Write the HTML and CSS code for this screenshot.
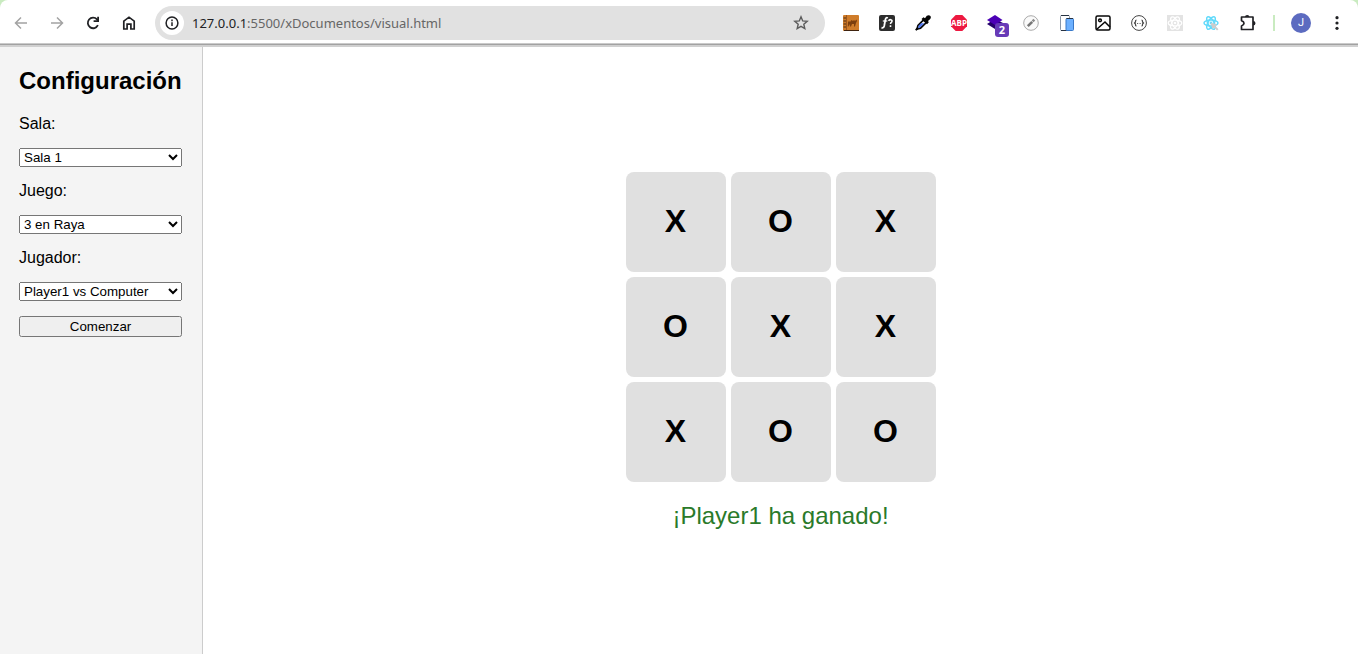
FILE: index.html
```html
<!DOCTYPE html>
<html lang="es">
<head>
<meta charset="utf-8">
<title>3 en Raya</title>
<link rel="stylesheet" href="styles.css">
</head>
<body>
<header class="toolbar">
  <button class="tool muted" aria-label="Atrás"><svg width="16" height="16" viewBox="0 0 16 16" fill="none" stroke="currentColor" stroke-width="1.5"><path d="M14 8H3M8 2.500L2.500 8L8 13.500"/></svg></button>
  <button class="tool muted" aria-label="Adelante"><svg width="16" height="16" viewBox="0 0 16 16" fill="none" stroke="currentColor" stroke-width="1.5"><path d="M2 8H13M8 2.500L13.500 8L8 13.500"/></svg></button>
  <button class="tool" aria-label="Recargar"><svg width="16" height="16" viewBox="0 0 16 16" fill="none" stroke="currentColor" stroke-width="1.8"><path d="M12.900 10.200A5.300 5.300 0 1 1 12 4.300L13 5.500"/><path d="M13.100 1.800V6.200H8.600"/></svg></button>
  <button class="tool" aria-label="Inicio"><svg width="16" height="16" viewBox="0 0 16 16" fill="none" stroke="currentColor" stroke-width="1.7"><path d="M2.800 6.200L8 2.200L13.200 6.200V14H9.900V9.200H6.100V14H2.800Z"/></svg></button>
  <div class="address">
    <button class="site-info" aria-label="Información del sitio"><svg width="16" height="16" viewBox="0 0 16 16" fill="none" stroke="currentColor" stroke-width="1.500"><circle cx="8" cy="8" r="5.900"/><path d="M8 7.200V11M8 4.600V6.200"/></svg></button>
    <div class="url"><span class="host">127.0.0.1</span>:5500/xDocumentos/visual.html</div>
    <button class="bookmark" aria-label="Marcador"><svg width="16" height="16" viewBox="0 0 16 16" fill="none" stroke="currentColor" stroke-width="1.400"><path d="M8 1.800L9.700 5.900L14.200 6.300L10.800 9.200L11.800 13.600L8 11.300L4.200 13.600L5.200 9.200L1.800 6.300L6.300 5.900Z"/></svg></button>
  </div>
  <nav class="extensions" aria-label="Extensiones">
    <button class="tool" aria-label="Perl"><svg width="16" height="16" viewBox="0 0 16 16"><rect width="16" height="16" rx="1" fill="#cf7c2a"/><path d="M1 15.500H16" stroke="#3f230f"/><path d="M3.500 0V15" stroke="#9c571e"/><path d="M.5 3H3M.5 6H3M.5 9H3M.5 12H3" stroke="#4c2c12" stroke-width="1.200"/><path d="M5 7L6 6L7 7L8.500 5L10 6L11 5L12 6L13.500 4.500L14 6L13 8L12 11.500H11V9H9L8 11.500H7L6.500 9L5.500 11.500H4.800Z" fill="#7d400f"/></svg></button>
    <button class="tool" aria-label="Fuentes"><svg width="16" height="16" viewBox="0 0 16 16"><rect width="16" height="16" rx="2" fill="#2d2d2d"/><g fill="none" stroke="#fff"><path d="M8.800 3.100Q6.900 1.700 6.300 5L5.200 11Q4.700 13.400 2.500 12.600" stroke-width="1.800"/><path d="M3.800 6H8.300" stroke-width="1.200"/><path d="M9.600 5.800Q10.200 4.500 11.700 4.700Q13.800 5.300 12.600 7.100Q11.500 7.700 11.500 9M11.500 10.300V12" stroke-width="1.600"/></g></svg></button>
    <button class="tool" aria-label="Cuentagotas"><svg width="16" height="16" viewBox="0 0 16 16"><path d="M2 14L3 10.500L8.500 5L11.300 7.500L5.500 13.200Z" fill="#fff" stroke="#050505" stroke-width="1.700"/><path d="M3 13.200L3.800 10.500L6 8.300H9.300L5 12.500Z" fill="#4a73f0"/><path d="M6.500 4L8.500 2.300L10 3.200L11.800.8Q14 -.5 15.400 1Q16.500 2.500 15 4.300L13 6L13.800 7.300L12 9.300Z" fill="#050505"/><path d="M.8 15.200L2.500 13.300" stroke="#050505" stroke-width="2"/></svg></button>
    <button class="tool" aria-label="Adblock Plus"><svg width="16" height="16" viewBox="0 0 16 16"><path d="M4.700 0H11.300L16 4.700V11.300L11.300 16H4.700L0 11.300V4.700Z" fill="#ed1941"/><text x="8" y="11" class="abp" text-anchor="middle">ABP</text></svg></button>
    <button class="tool" aria-label="Capas, 2"><svg width="28" height="28" viewBox="-2 -2 28 28"><path d="M4 13L12 8L20 12L12 18Z" fill="#24006b"/><path d="M4 9L12 4L19.500 9L12 14Z" fill="#4b00b5"/><rect x="12" y="12" width="14" height="14" rx="3" fill="#673ab7"/><text x="19" y="23" class="count" text-anchor="middle">2</text></svg></button>
    <button class="tool" aria-label="Editar"><svg width="16" height="16" viewBox="0 0 16 16"><circle cx="8" cy="8" r="7.300" fill="#fafafa" stroke="#aaa"/><path d="M4.800 11.200L9.200 6.800" stroke="#777" stroke-width="2.600"/><path d="M9.600 6.400L11.300 4.700" stroke="#8a8a8a" stroke-width="2.600"/></svg></button>
    <button class="tool" aria-label="Dispositivos"><svg width="16" height="16" viewBox="0 0 16 16"><rect x="1.500" y=".5" width="9" height="15" rx="1" fill="#fff" stroke="#8a97a8"/><path d="M2 .5H10M2 15.500H8" stroke="#263242"/><rect x="7" y="3.500" width="7.500" height="12" rx="1" fill="#6cb0ff" stroke="#3978c7"/><path d="M7.500 3.500H14" stroke="#263242"/></svg></button>
    <button class="tool" aria-label="Imágenes"><svg width="16" height="16" viewBox="0 0 16 16" fill="none" stroke="#080808" stroke-width="1.500"><rect x="1" y="1" width="14" height="14" rx="1.500"/><circle cx="5" cy="5.300" r="1.400"/><path d="M1.500 14.500L10 7L15 12"/></svg></button>
    <button class="tool" aria-label="JSON"><svg width="16" height="16" viewBox="0 0 16 16" fill="none" stroke="#444"><circle cx="8" cy="8" r="7.400"/><path d="M5.500 5Q4.500 5 4.500 6V7L3.500 8L4.500 9V10Q4.500 11 5.500 11M10.500 5Q11.500 5 11.500 6V7L12.500 8L11.500 9V10Q11.500 11 10.500 11" stroke-width="1.200"/><path d="M6.200 8.500H7.200M8.600 8.500H9.600"/></svg></button>
    <button class="tool" aria-label="React inactivo"><svg width="16" height="16" viewBox="0 0 16 16"><rect width="16" height="16" fill="#e3e3e3"/><g fill="none" stroke="#fff" stroke-width="1.200"><ellipse cx="8" cy="8" rx="6.800" ry="2.900"/><ellipse cx="8" cy="8" rx="6.800" ry="2.900" transform="rotate(60 8 8)"/><ellipse cx="8" cy="8" rx="6.800" ry="2.900" transform="rotate(120 8 8)"/></g><circle cx="8" cy="8" r="1.300" fill="#fff"/></svg></button>
    <button class="tool" aria-label="React"><svg width="16" height="16" viewBox="0 0 16 16"><g fill="none" stroke="#61dafb" stroke-width="1.500"><ellipse cx="8" cy="8" rx="7" ry="3"/><ellipse cx="8" cy="8" rx="7" ry="3" transform="rotate(60 8 8)"/><ellipse cx="8" cy="8" rx="7" ry="3" transform="rotate(120 8 8)"/></g><circle cx="8" cy="8" r="1.400" fill="#61dafb"/><path d="M7.500 7.500L14 9.500L12.600 11.300L15.500 14.200L14 15.500L11.300 12.600L9.500 14Z" fill="#ccc"/></svg></button>
    <button class="tool" aria-label="Extensiones"><svg width="20" height="20" viewBox="-1 -1 20 20" fill="none" stroke="#202124" stroke-width="1.700"><path d="M3.500 3H15V15.500H3.500V12Q6 11 6 9.300Q6 7.500 3.500 6.600Z" stroke-linejoin="round"/><path d="M7 3Q7 .9 9.200 .9Q11.400 .9 11.400 3ZM15 7Q17.500 7 17.500 9.200Q17.500 11.500 15 11.500Z" fill="#202124" stroke="none"/></svg></button>
  </nav>
  <div class="divider"></div>
  <button class="tool" aria-label="Perfil"><span class="avatar">J</span></button>
  <button class="tool" aria-label="Menú"><svg width="16" height="16" viewBox="0 0 16 16" fill="#202124"><circle cx="8" cy="2.700" r="1.600"/><circle cx="8" cy="8" r="1.600"/><circle cx="8" cy="13.300" r="1.600"/></svg></button>
</header>
<div class="page">
  <aside class="sidebar">
    <h2 class="title">Configuración</h2>
    <label for="sala">Sala:</label>
    <select id="sala" class="control"><option>Sala 1</option></select>
    <label for="juego">Juego:</label>
    <select id="juego" class="control"><option>3 en Raya</option></select>
    <label for="jugador">Jugador:</label>
    <select id="jugador" class="control"><option>Player1 vs Computer</option></select>
    <button class="start">Comenzar</button>
  </aside>
  <main class="game">
    <div class="board">
      <button class="cell">X</button><button class="cell">O</button><button class="cell">X</button>
      <button class="cell">O</button><button class="cell">X</button><button class="cell">X</button>
      <button class="cell">X</button><button class="cell">O</button><button class="cell">O</button>
    </div>
    <p class="message">¡Player1 ha ganado!</p>
  </main>
</div>
</body>
</html>
```
FILE: styles.css
```css
* {
  box-sizing: border-box;
}

body {
  margin: 0;
  min-height: 100vh;
  display: flex;
  flex-direction: column;
  background: #c9ebc0;
  color: #000;
  font-family: Arial, "Liberation Sans", sans-serif;
}

.toolbar {
  display: flex;
  align-items: center;
  height: 47px;
  padding: 0 3px 1px;
  background: #fff;
  border-radius: 8px 8px 0 0;
  box-shadow: inset 0 -2px #d0d0d0, inset 0 -3px #a2a2a2, inset 0 -4px #cacaca;
}

.tool,
.site-info,
.bookmark {
  display: flex;
  align-items: center;
  justify-content: center;
  flex: none;
  padding: 0;
  border: 0;
  background: none;
  color: #202124;
}

.tool {
  width: 36px;
  height: 34px;
}

.muted {
  color: #a3a3a3;
}

.address {
  display: flex;
  align-items: center;
  flex: 1;
  min-width: 0;
  height: 34px;
  margin: 0 8px;
  padding: 0 12px 0 5px;
  border-radius: 17px;
  background: #e1e1e1;
}

.site-info {
  width: 24px;
  height: 24px;
  border-radius: 50%;
  background: #fff;
}

.url {
  flex: 1;
  min-width: 0;
  padding-left: 8px;
  overflow: hidden;
  white-space: nowrap;
  font: 13px/20px "Noto Sans", "Open Sans", sans-serif;
  color: #666;
}

.host {
  color: #202124;
}

.bookmark {
  width: 24px;
  height: 24px;
  color: #5c5c5c;
}

.extensions {
  display: flex;
}

.abp {
  font: bold 8px "Open Sans", sans-serif;
  fill: #fff;
}

.count {
  font: bold 11px "Open Sans", sans-serif;
  fill: #fff;
}

.divider {
  width: 2px;
  height: 16px;
  margin: 0 8px;
  background: #c9ebc0;
}

.avatar {
  width: 20px;
  height: 20px;
  border-radius: 50%;
  background: #5c6bc0;
  color: #fff;
  font: 11px/20px Roboto, sans-serif;
  text-align: center;
}

.page {
  display: flex;
  flex: 1;
  background: #fff;
}

.sidebar {
  display: flex;
  flex-direction: column;
  gap: 15px;
  min-width: 203px;
  padding: 20px 20px 20px 19px;
  border-right: 1px solid #ccc;
  background: #f4f4f4;
  font-size: 16px;
  line-height: 18px;
}

.title {
  margin: 0 0 5px;
  font-size: 24px;
  line-height: 28px;
}

.control {
  height: 19px;
  font-family: inherit;
}

.start {
  height: 21px;
  font-family: inherit;
}

.game {
  display: flex;
  flex: 1;
  flex-direction: column;
  align-items: center;
  justify-content: center;
}

.board {
  display: grid;
  grid-template-columns: repeat(3, 100px);
  grid-auto-rows: 100px;
  gap: 5px;
}

.cell {
  padding: 0 0 1px;
  border: 0;
  border-radius: 8px;
  background: #e0e0e0;
  color: #000;
  font: bold 32px Arial, "Liberation Sans", sans-serif;
}

.message {
  margin: 20px 0 0;
  font-size: 24px;
  line-height: 27px;
  color: #2a7a2a;
}
```
